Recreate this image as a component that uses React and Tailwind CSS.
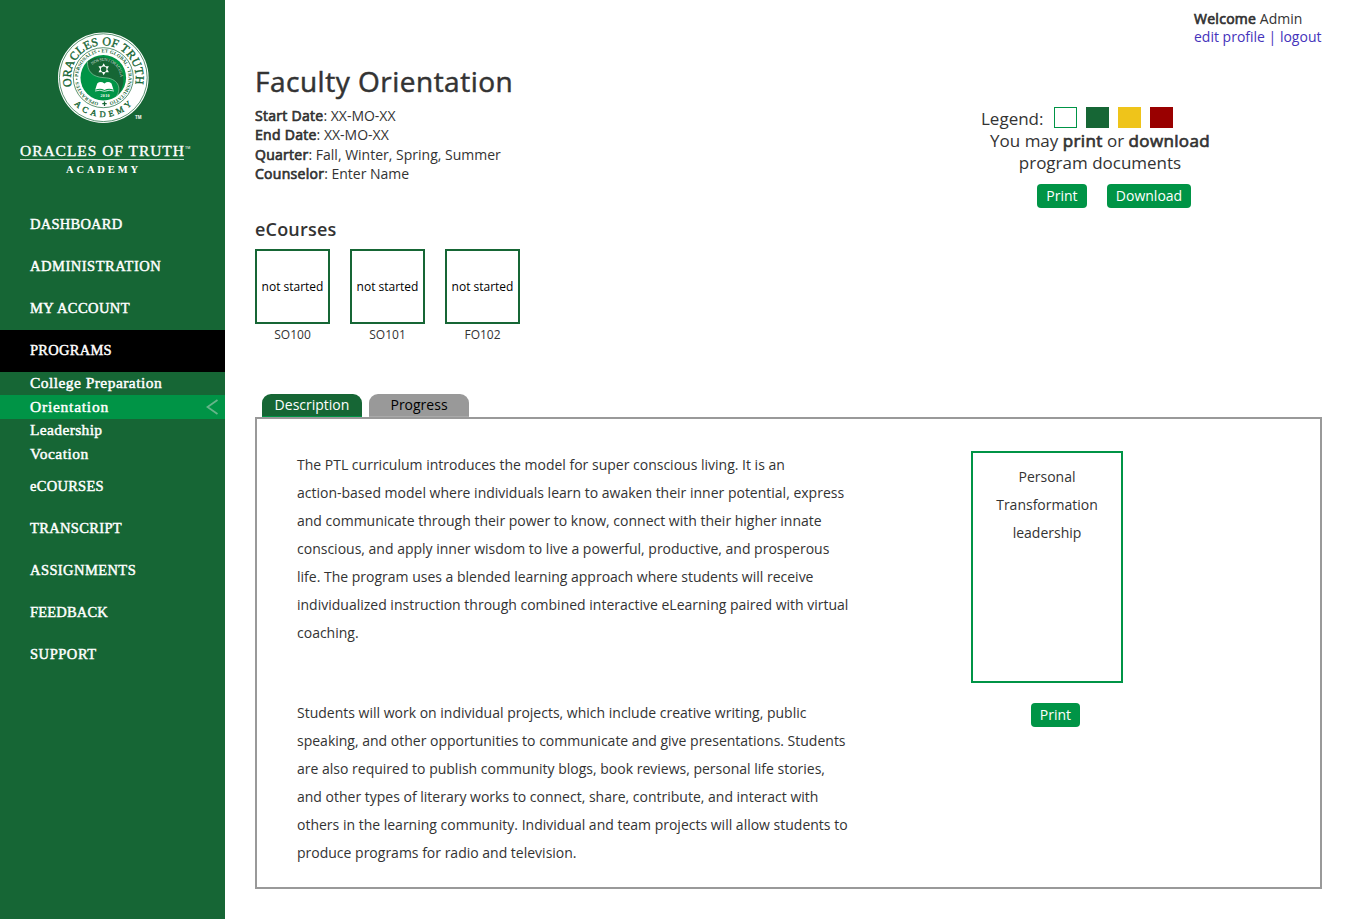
import React from "react";

const NAV_TOP = [
  ["DASHBOARD", "tracking-[0.25px]"],
  ["ADMINISTRATION", "tracking-[0.52px]"],
  ["MY ACCOUNT", "tracking-[0.42px]"],
];
const NAV_SUB = [
  ["College Preparation", "h-[23px] tracking-[0.45px]"],
  ["Orientation", "h-6 tracking-[0.76px]"],
  ["Leadership", "h-[23px] tracking-[0.36px]"],
  ["Vocation", "h-6 tracking-[0.5px]"],
];
const NAV_BOTTOM = [
  ["eCOURSES", "tracking-[0.28px]"],
  ["TRANSCRIPT", "tracking-[0.34px]"],
  ["ASSIGNMENTS", "tracking-[0.42px]"],
  ["FEEDBACK", "tracking-[0.18px]"],
  ["SUPPORT", "tracking-[0.55px]"],
];

const INTRO = [
  "The PTL curriculum introduces the model for super conscious living. It is an",
  "action-based model where individuals learn to awaken their inner potential, express",
  "and communicate through their power to know, connect with their higher innate",
  "conscious, and apply inner wisdom to live a powerful, productive, and prosperous",
  "life. The program uses a blended learning approach where students will receive",
  "individualized instruction through combined interactive eLearning paired with virtual",
  "coaching.",
];
const PROJECTS = [
  "Students will work on individual projects, which include creative writing, public",
  "speaking, and other opportunities to communicate and give presentations. Students",
  "are also required to publish community blogs, book reviews, personal life stories,",
  "and other types of literary works to connect, share, contribute, and interact with",
  "others in the learning community. Individual and team projects will allow students to",
  "produce programs for radio and television.",
];

function Logo() {
  return (
    <svg className="block h-[203px] w-[225px] shrink-0" viewBox="0 0 225 203" fill="#fff" fontFamily="'Liberation Serif', serif">
      <defs>
        <path id="name" d="M72.100 86.400 A32.400 32.400 0 1 1 134.500 86.400" />
        <path id="academy" d="M63.900 77.700 A39.400 39.400 0 0 0 142.700 77.700" />
        <path id="motto" d="M98.500 102.400 A25.200 25.200 0 1 1 108.100 102.400" />
        <path id="inner" d="M92.200 65 A17 17 0 0 1 120.200 80" />
      </defs>
      <circle cx="103.300" cy="77.700" r="45.300" />
      <circle cx="103.300" cy="77.700" r="43.900" fill="none" stroke="#166635" strokeWidth="0.700" />
      <circle cx="103.300" cy="77.700" r="30" fill="none" stroke="#166635" strokeWidth="0.700" />
      <circle cx="103.300" cy="77.700" r="22.800" fill="#009446" />
      <path d="M87.500 61.300 A22.800 22.800 0 0 1 116.500 96.300 C122 88 118 78 104 77.700 C92 77 87 71 87.500 61.300Z" fill="#166635" />
      <path d="M87.500 61.300 C87 71 92 77 104 77.700 C118 78 122 88 116.500 96.300" fill="none" stroke="#8cc9a5" strokeWidth="0.700" />
      <text fill="#166635" fontSize="12" stroke="#166635" strokeWidth="0.350">
        <textPath href="#name" textLength="117">ORACLES OF TRUTH</textPath>
      </text>
      <text fill="#166635" fontSize="8.500" stroke="#166635" strokeWidth="0.350">
        <textPath href="#academy" startOffset="29" textLength="65">ACADEMY</textPath>
      </text>
      <text fill="#166635" fontSize="4.900" fontWeight="bold">
        <textPath href="#motto" textLength="147">OPERANTES • PERSONALIS • ET GLOBAL • TRANSMUTATIO</textPath>
      </text>
      <path d="M104.500 101.500v4.400M102.300 103.700h4.400" stroke="#166635" strokeWidth="1.300" />
      <text fontSize="4.200" fillOpacity="0.850">
        <textPath href="#inner" textLength="38">NOS SUNT ORACULA</textPath>
      </text>
      <path
        fillRule="evenodd"
        d="M103.700 63.200L105.400 66.200L108.900 66.200L107.200 69.200L108.900 72.200L105.400 72.200L103.700 75.200L102 72.200L98.500 72.200L100.200 69.200L98.500 66.200L102 66.200ZM103.700 66.400A2.800 2.800 0 1 0 103.700 72A2.800 2.800 0 1 0 103.700 66.400Z"
      />
      <path d="M97.200 83.500 Q100.500 80.700 104.500 83.500 Q108 80.700 111.500 83.500 L113.500 89.700 Q108.500 87.600 104.500 90 Q100.500 87.600 95.200 89.700Z" />
      <path d="M95 91 Q100 89.300 104.500 91.300 Q109 89.300 114 91" fill="none" stroke="#fff" strokeWidth="0.800" />
      <text x="100.500" y="97.200" fontSize="4" fontWeight="bold" textLength="9">2010</text>
      <text x="135" y="118.500" fontSize="4.500" fontWeight="bold" fontFamily="'Liberation Sans', sans-serif">TM</text>
      <text x="20" y="156" fontSize="15.500" textLength="164" stroke="#fff" strokeWidth="0.350">ORACLES OF TRUTH</text>
      <text x="185" y="149" fontSize="3.600" fontFamily="'Liberation Sans', sans-serif">TM</text>
      <rect x="20" y="159" width="164" height="1" fill="#c5dacd" />
      <text x="66" y="173" fontSize="10.500" fontWeight="bold" textLength="72">ACADEMY</text>
    </svg>
  );
}

function NavItem({ label, tracking, active }) {
  return (
    <a className={`flex h-[42px] items-center pb-[2px] pl-[30px] ${tracking} ${active ? "bg-black" : ""}`}>
      <span>{label}</span>
    </a>
  );
}

function Sidebar() {
  return (
    <aside className="flex w-[225px] shrink-0 flex-col bg-[#166635] font-['Liberation_Serif',serif] text-[14.5px] text-white">
      <Logo />
      <nav className="pt-px [-webkit-text-stroke:0.45px_#fff]">
        {NAV_TOP.map(([label, tracking]) => (
          <NavItem key={label} label={label} tracking={tracking} />
        ))}
        <NavItem label="PROGRAMS" tracking="tracking-[0.27px]" active />
        {NAV_SUB.map(([label, style]) => (
          <a key={label} className={`flex items-center justify-between pl-[30px] pr-[7px] text-[15.5px] ${style} ${label === "Orientation" ? "bg-[#009446]" : ""}`}>
            <span>{label}</span>
            {label === "Orientation" && (
              <svg className="h-4 w-3" viewBox="0 0 12 16" fill="none" stroke="#66b58a" strokeWidth="1.800">
                <path d="M11.500 1L1.500 8L11.500 15" />
              </svg>
            )}
          </a>
        ))}
        {NAV_BOTTOM.map(([label, tracking]) => (
          <NavItem key={label} label={label} tracking={tracking} />
        ))}
      </nav>
    </aside>
  );
}

function Bold({ children }) {
  return <span className="tracking-[0.02em] [-webkit-text-stroke:0.7px_#333]">{children}</span>;
}

function Button({ children, width }) {
  return <button className={`h-6 rounded-[4px] bg-[#009446] text-sm leading-6 text-white ${width}`}>{children}</button>;
}

function Lines({ lines }) {
  return (
    <p>
      {lines.map((line) => (
        <span key={line} className="block whitespace-nowrap">{line}</span>
      ))}
    </p>
  );
}

export default function App() {
  return (
    <div className="flex h-[919px] w-[1352px] overflow-hidden bg-white font-['Open_Sans',sans-serif] text-sm text-[#333]">
      <Sidebar />
      <main className="flex grow flex-col pl-[30px] pr-[30px] pt-[10px]">
        <div className="w-32 self-end whitespace-nowrap leading-[18px]">
          <div><Bold>Welcome</Bold> Admin</div>
          <div className="text-[#43b]">edit profile | logout</div>
        </div>

        <section className="flex h-[172px] justify-between pt-[15px]">
          <div>
            <h1 className="text-[28px] leading-10 tracking-[0.5px] [-webkit-text-stroke:0.5px_#333]">Faculty Orientation</h1>
            <div className="pt-[5px] leading-[19.4px]">
              <div><Bold>Start Date</Bold>: XX-MO-XX</div>
              <div><Bold>End Date</Bold>: XX-MO-XX</div>
              <div><Bold>Quarter</Bold>: Fall, Winter, Spring, Summer</div>
              <div><Bold>Counselor</Bold>: Enter Name</div>
            </div>
          </div>
          <div className="mr-[89px] w-[252px] pt-[46px] text-[17px] leading-[22px]">
            <div className="flex h-[23px] gap-[9px]">
              <span className="mr-[2px] w-[62px] pt-px">Legend:</span>
              <span className="h-[21px] w-[23px] border border-[#009446]" />
              <span className="h-[21px] w-[23px] bg-[#166635]" />
              <span className="h-[21px] w-[23px] bg-[#efc41a]" />
              <span className="h-[21px] w-[23px] bg-[#900]" />
            </div>
            <div className="w-[238px] text-center">
              <div>You may <Bold>print</Bold> or <Bold>download</Bold></div>
              <div>program documents</div>
            </div>
            <div className="flex gap-5 pl-[56px] pt-[10px]">
              <Button width="w-[50px]">Print</Button>
              <Button width="w-[84px]">Download</Button>
            </div>
          </div>
        </section>

        <section className="h-[176px]">
          <h2 className="h-[31px] text-lg font-semibold leading-[22px] tracking-[0.2px]">eCourses</h2>
          <div className="flex gap-5 text-center text-xs">
            {["SO100", "SO101", "FO102"].map((code) => (
              <div key={code} className="w-[75px]">
                <div className="flex h-[75px] items-center justify-center whitespace-nowrap border-2 border-[#166635] text-black">not started</div>
                <div className="leading-[21px]">{code}</div>
              </div>
            ))}
          </div>
        </section>

        <div className="flex gap-[7px] pl-[7px] text-center leading-[22px]">
          <div className="h-[23px] w-[100px] rounded-t-[9px] border-b border-[#009446] bg-[#166635] text-white">Description</div>
          <div className="h-[23px] w-[100px] rounded-t-[9px] border-b border-[#aaa] bg-[#999] text-black">Progress</div>
        </div>
        <section className="flex h-[472px] border-2 border-[#999] pl-[40px] pt-8 leading-7">
          <div className="flex w-[674px] flex-col gap-[52px]">
            <Lines lines={INTRO} />
            <Lines lines={PROJECTS} />
          </div>
          <div className="w-[152px] text-center">
            <div className="h-[232px] border-2 border-[#009446] px-5 pt-[10px]">Personal Transformation leadership</div>
            <div className="flex pl-[60px] pt-5"><Button width="w-[49px]">Print</Button></div>
          </div>
        </section>
      </main>
    </div>
  );
}
